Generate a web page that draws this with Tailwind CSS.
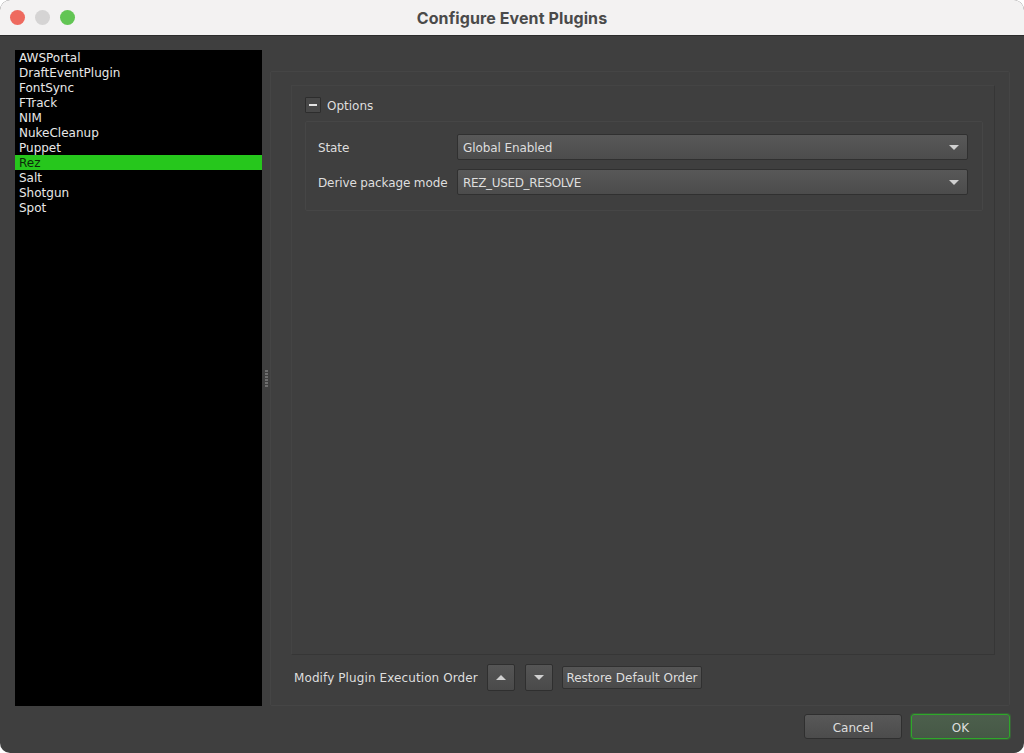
<!DOCTYPE html>
<html lang="en">

<head>
  <meta charset="UTF-8" />
  <title>Configure Event Plugins</title>
  <script src="https://cdn.jsdelivr.net/npm/@tailwindcss/browser@4"></script>
</head>

<body class="bg-white overflow-hidden">
  <div class="w-[1024px] h-[753px] flex flex-col rounded-b-[10px] rounded-t-[10px] overflow-hidden bg-[#3f3f3f] font-['DejaVu_Sans',sans-serif] text-[12px] text-[#dedede]">

    <!-- title bar -->
    <div class="h-[36px] shrink-0 flex items-center relative bg-[#f3f2f2] border-b border-[#2c2c2c]">
      <div class="flex gap-[10px] pl-[10px]">
        <span class="w-[15px] h-[15px] rounded-full bg-[#ee6a5f]"></span>
        <span class="w-[15px] h-[15px] rounded-full bg-[#d5d4d4]"></span>
        <span class="w-[15px] h-[15px] rounded-full bg-[#62c554]"></span>
      </div>
      <div class="absolute inset-x-0 text-center font-['Inter',sans-serif] font-bold text-[16px] tracking-[0.1px] text-[#4a4a4a]">Configure Event Plugins</div>
    </div>

    <div class="flex-1 flex pl-[15px] pr-[14px] pt-[14px] min-h-0">
      <!-- plugin list -->
      <ul class="w-[247px] h-[656px] shrink-0 bg-black leading-[15px] text-[#e8e8e8]">
        <li class="h-[15px] pt-[1px] pl-[4px]">AWSPortal</li>
        <li class="h-[15px] pt-[1px] pl-[4px]">DraftEventPlugin</li>
        <li class="h-[15px] pt-[1px] pl-[4px]">FontSync</li>
        <li class="h-[15px] pt-[1px] pl-[4px]">FTrack</li>
        <li class="h-[15px] pt-[1px] pl-[4px]">NIM</li>
        <li class="h-[15px] pt-[1px] pl-[4px]">NukeCleanup</li>
        <li class="h-[15px] pt-[1px] pl-[4px]">Puppet</li>
        <li class="h-[15px] pt-[1px] pl-[4px] bg-[#26c71c] text-[#0c2a0a]">Rez</li>
        <li class="h-[15px] pt-[1px] pl-[4px]">Salt</li>
        <li class="h-[15px] pt-[1px] pl-[4px]">Shotgun</li>
        <li class="h-[15px] pt-[1px] pl-[4px]">Spot</li>
      </ul>

      <!-- splitter -->
      <div class="w-[8px] h-[656px] shrink-0 flex flex-col items-center justify-center gap-[1px]">
        <span class="w-[3px] h-[2px] bg-[#6e6e6e]"></span>
        <span class="w-[3px] h-[2px] bg-[#6e6e6e]"></span>
        <span class="w-[3px] h-[2px] bg-[#6e6e6e]"></span>
        <span class="w-[3px] h-[2px] bg-[#6e6e6e]"></span>
        <span class="w-[3px] h-[2px] bg-[#6e6e6e]"></span>
        <span class="w-[3px] h-[2px] bg-[#6e6e6e]"></span>
      </div>

      <!-- right panel -->
      <div class="flex-1 mt-[21px] h-[635px] border border-[#454545] rounded-[2px] flex flex-col pl-[20px] pr-[14px] pt-[13px]">
        <div class="h-[570px] border border-[#363636] border-l-[#444444] border-t-[#444444] pl-[13px] pr-[11px] pt-[11px]">
          <div class="flex items-center gap-[6px] h-[16px]">
            <span class="w-[16px] h-[16px] flex items-center justify-center bg-[#484848] border border-[#2d2d2d] rounded-[1px]">
              <span class="w-[8px] h-[2px] bg-[#e4e4e4]"></span>
            </span>
            <span class="pt-[2px]">Options</span>
          </div>
          <div class="mt-[8px] h-[90px] border border-[#464646] rounded-[2px] pl-[12px] pr-[14px] pt-[12px] flex flex-col gap-[9px]">
            <div class="flex items-center">
              <label class="w-[139px] shrink-0 pt-[2px] tracking-[-0.12px]">State</label>
              <div class="flex-1 h-[26px] flex items-center justify-between pl-[5px] pr-[8px] rounded-[2px] border border-[#303030] bg-[linear-gradient(#585858,#4c4c4c)]">
                <span class="pt-[2px] tracking-[-0.1px]">Global Enabled</span>
                <svg width="10" height="5" viewBox="0 0 10 5"><path d="M0 0H10L5 5Z" fill="#d0d0d0"/></svg>
              </div>
            </div>
            <div class="flex items-center">
              <label class="w-[139px] shrink-0 pt-[2px] tracking-[-0.12px]">Derive package mode</label>
              <div class="flex-1 h-[26px] flex items-center justify-between pl-[5px] pr-[8px] rounded-[2px] border border-[#303030] bg-[linear-gradient(#585858,#4c4c4c)]">
                <span class="pt-[2px] tracking-[-0.35px]">REZ_USED_RESOLVE</span>
                <svg width="10" height="5" viewBox="0 0 10 5"><path d="M0 0H10L5 5Z" fill="#d0d0d0"/></svg>
              </div>
            </div>
          </div>
        </div>

        <div class="flex items-center mt-[9px] pl-[3px]">
          <span class="w-[193px] shrink-0 tracking-[0.1px]">Modify Plugin Execution Order</span>
          <button class="w-[28px] h-[27px] flex items-center justify-center rounded-[2px] border border-[#2f2f2f] bg-[linear-gradient(#555555,#4a4a4a)]">
            <svg width="10" height="5" viewBox="0 0 10 5"><path d="M0 5H10L5 0Z" fill="#d0d0d0"/></svg>
          </button>
          <button class="ml-[10px] w-[28px] h-[27px] flex items-center justify-center rounded-[2px] border border-[#2f2f2f] bg-[linear-gradient(#555555,#4a4a4a)]">
            <svg width="10" height="5" viewBox="0 0 10 5"><path d="M0 0H10L5 5Z" fill="#d0d0d0"/></svg>
          </button>
          <button class="ml-[9px] w-[140px] h-[23px] flex items-center justify-center rounded-[2px] border border-[#303030] bg-[linear-gradient(#555555,#4a4a4a)]">Restore Default Order</button>
        </div>
      </div>
    </div>

    <!-- dialog buttons -->
    <div class="h-[47px] shrink-0 flex justify-end gap-[9px] pr-[14px] pt-[8px]">
      <button class="w-[98px] h-[25px] flex items-center justify-center pt-[2px] rounded-[3px] border border-[#2f2f2f] bg-[linear-gradient(#585858,#4c4c4c)]">Cancel</button>
      <button class="w-[99px] h-[25px] flex items-center justify-center pt-[2px] rounded-[3px] border border-[#2ea82a] shadow-[0_0_0_1px_rgba(46,168,42,0.3)] bg-[linear-gradient(#4c5f4c,#465846)]">OK</button>
    </div>
  </div>
</body>

</html>
